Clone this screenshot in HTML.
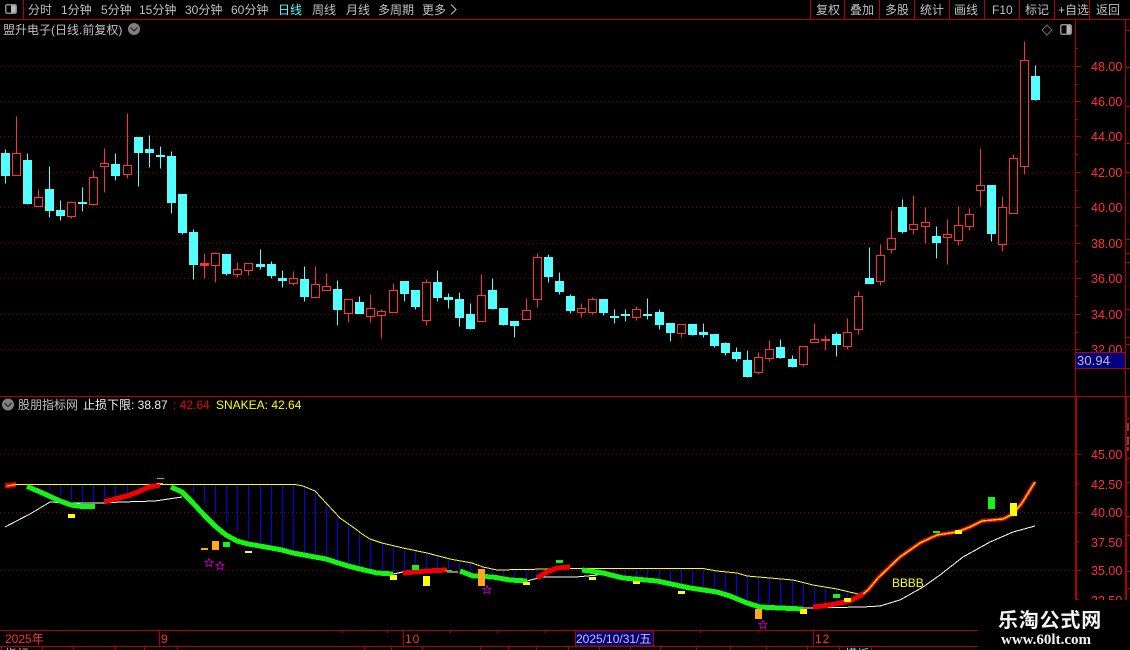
<!DOCTYPE html>
<html>
<head>
<meta charset="utf-8">
<style>
html,body{margin:0;padding:0;background:#000;width:1130px;height:650px;overflow:hidden}
svg{display:block;position:absolute;left:0;top:0}
text{font-family:"Liberation Sans","WenQuanYi Zen Hei","Noto Sans CJK SC",sans-serif;font-size:12px;fill:#c0c0c0}
.ax text{fill:#ff3232;font-size:12.5px}
.tb text{font-size:12px}
</style>
</head>
<body>
<svg width="1130" height="650" viewBox="0 0 1130 650">
<rect width="1130" height="650" fill="#000"/>

<!-- grid -->
<g stroke="#8c0000" stroke-width="1" stroke-dasharray="1 3" fill="none" shape-rendering="crispEdges">
<path d="M0 66.5H1075M0 101.5H1075M0 136.5H1075M0 172.5H1075M0 207.5H1075M0 243.5H1075M0 278.5H1075M0 314.5H1075M0 349.5H1075"/>
<path d="M0 454.5H1075M0 512.5H1075M0 570.5H1075"/>
</g>

<!-- frame lines -->
<g stroke="#b00000" fill="none" shape-rendering="crispEdges">
<path d="M0 19.5H1130M0 396.5H1130" stroke-width="1"/>
<path d="M23.5 0V19M810.5 0V19M844.5 0V19M879.5 0V19M914.5 0V19M949.5 0V19M984.5 0V19M1019.5 0V19M1054.5 0V19M1089.5 0V19"/>
<path d="M1075.5 19V396M1125.5 19V396"/>
<path d="M1076 397V600M1126 397V600" stroke-width="2"/>
<!-- left axis ticks -->
<path d="M1075 66.5H1081M1075 101.5H1081M1075 136.5H1081M1075 172.5H1081M1075 207.5H1081M1075 243.5H1081M1075 278.5H1081M1075 314.5H1081M1075 349.5H1081"/>
<path d="M1075 84.5H1078M1075 119.5H1078M1075 154.5H1078M1075 190.5H1078M1075 225.5H1078M1075 261.5H1078M1075 296.5H1078M1075 332.5H1078M1075 368.5H1078M1075 48.5H1078"/>
<path d="M1076 454.5H1081M1076 512.5H1081M1076 570.5H1081M1076 483.5H1079M1076 541.5H1079M1076 599.5H1079" stroke-width="1"/>
<!-- right axis ticks -->
<path d="M1126 30.5H1130M1126 67.5H1130M1126 106.5H1130M1126 143.5H1130M1126 172.5H1130M1126 239.5H1130M1126 253.5H1130M1126 262.5H1130M1126 309.5H1130M1126 337.5H1130M1126 344.5H1130M1126 368.5H1130"/>
<path d="M1127 418.5H1130M1127 437.5H1130M1127 458.5H1130M1127 482.5H1130M1127 516.5H1130M1127 535.5H1130M1127 571.5H1130M1127 588.5H1130"/>
</g>
<path d="M1128 423V431M1128 437V445M1128 447V451" stroke="#a8a8a8" stroke-width="1" fill="none" shape-rendering="crispEdges"/>

<!-- candles cyan -->
<path fill="#54ffff" stroke="#54ffff" stroke-width="1" shape-rendering="crispEdges" d="M5.5 149.5V183.5M1.5 153.5h8V175.5h-8zM27.5 153.5V204.5M23.5 160.5h8V203.5h-8zM49.5 166.5V217.5M45.5 189.5h8V210.5h-8zM60.5 200.5V220.5M56.5 210.5h8V215.5h-8zM82.5 187.5V211.5M78.5 202.5h8V203.5h-8zM115.5 153.5V180.5M111.5 164.5h8V175.5h-8zM138.5 137.5V186.5M134.5 137.5h8V152.5h-8zM149.5 135.5V167.5M145.5 149.5h8V152.5h-8zM160.5 146.5V168.5M156.5 155.5h8V156.5h-8zM171.5 151.5V213.5M167.5 156.5h8V202.5h-8zM182.5 194.5V234.5M178.5 194.5h8V232.5h-8zM193.5 229.5V279.5M189.5 232.5h8V264.5h-8zM226.5 254.5V275.5M222.5 254.5h8V273.5h-8zM260.5 249.5V269.5M256.5 264.5h8V266.5h-8zM271.5 261.5V278.5M267.5 264.5h8V275.5h-8zM282.5 270.5V287.5M278.5 278.5h8V280.5h-8zM304.5 266.5V301.5M300.5 279.5h8V296.5h-8zM337.5 280.5V325.5M333.5 289.5h8V309.5h-8zM359.5 296.5V313.5M355.5 302.5h8V313.5h-8zM404.5 281.5V301.5M400.5 281.5h8V293.5h-8zM415.5 290.5V309.5M411.5 290.5h8V306.5h-8zM437.5 270.5V301.5M433.5 282.5h8V297.5h-8zM448.5 293.5V308.5M444.5 297.5h8V299.5h-8zM459.5 292.5V326.5M455.5 299.5h8V317.5h-8zM470.5 303.5V329.5M466.5 314.5h8V328.5h-8zM492.5 278.5V309.5M488.5 290.5h8V308.5h-8zM503.5 308.5V325.5M499.5 308.5h8V324.5h-8zM514.5 321.5V337.5M510.5 321.5h8V325.5h-8zM548.5 254.5V282.5M544.5 257.5h8V276.5h-8zM559.5 272.5V294.5M555.5 281.5h8V291.5h-8zM570.5 294.5V313.5M566.5 296.5h8V310.5h-8zM603.5 299.5V315.5M599.5 299.5h8V312.5h-8zM614.5 309.5V323.5M610.5 316.5h8V317.5h-8zM625.5 309.5V321.5M621.5 314.5h8V315.5h-8zM647.5 298.5V319.5M643.5 314.5h8V315.5h-8zM659.5 309.5V329.5M655.5 312.5h8V324.5h-8zM670.5 323.5V341.5M666.5 323.5h8V332.5h-8zM692.5 324.5V335.5M688.5 324.5h8V334.5h-8zM703.5 323.5V337.5M699.5 332.5h8V334.5h-8zM714.5 334.5V347.5M710.5 334.5h8V345.5h-8zM725.5 342.5V355.5M721.5 343.5h8V352.5h-8zM736.5 347.5V361.5M732.5 352.5h8V358.5h-8zM747.5 350.5V377.5M743.5 360.5h8V376.5h-8zM780.5 339.5V358.5M776.5 347.5h8V357.5h-8zM792.5 355.5V367.5M788.5 359.5h8V366.5h-8zM836.5 332.5V356.5M832.5 334.5h8V344.5h-8zM869.5 247.5V283.5M865.5 278.5h8V283.5h-8zM902.5 199.5V233.5M898.5 207.5h8V231.5h-8zM936.5 226.5V258.5M932.5 236.5h8V242.5h-8zM991.5 185.5V241.5M987.5 185.5h8V233.5h-8zM1035.5 65.5V100.5M1031.5 76.5h8V99.5h-8z"/>

<!-- candles red -->
<path fill="none" stroke="#ff3232" stroke-width="1" shape-rendering="crispEdges" d="M16.5 116.5V153.5M12.5 153.5h8V175.5h-8zM38.5 189.5V197.5M34.5 197.5h8V206.5h-8zM71.5 201.5V202.5M67.5 202.5h8V216.5h-8zM71.5 216.5V218.5M93.5 170.5V177.5M89.5 177.5h8V204.5h-8zM93.5 204.5V205.5M104.5 148.5V163.5M100.5 163.5h8V166.5h-8zM104.5 166.5V192.5M127.5 113.5V165.5M123.5 165.5h8V174.5h-8zM127.5 174.5V178.5M204.5 253.5V263.5M200.5 263.5h8V265.5h-8zM204.5 265.5V278.5M215.5 252.5V253.5M211.5 253.5h8V265.5h-8zM215.5 265.5V282.5M237.5 262.5V269.5M233.5 269.5h8V274.5h-8zM237.5 274.5V277.5M244.5 263.5h8V270.5h-8zM248.5 270.5V275.5M293.5 271.5V278.5M289.5 278.5h8V283.5h-8zM293.5 283.5V285.5M315.5 266.5V284.5M311.5 284.5h8V297.5h-8zM326.5 273.5V286.5M322.5 286.5h8V290.5h-8zM344.5 299.5h8V313.5h-8zM348.5 313.5V322.5M370.5 294.5V308.5M366.5 308.5h8V316.5h-8zM370.5 316.5V322.5M381.5 309.5V311.5M377.5 311.5h8V315.5h-8zM381.5 315.5V338.5M393.5 283.5V290.5M389.5 290.5h8V312.5h-8zM426.5 279.5V282.5M422.5 282.5h8V320.5h-8zM426.5 320.5V325.5M481.5 274.5V295.5M477.5 295.5h8V321.5h-8zM526.5 298.5V310.5M522.5 310.5h8V319.5h-8zM537.5 253.5V257.5M533.5 257.5h8V299.5h-8zM537.5 299.5V307.5M581.5 303.5V308.5M577.5 308.5h8V312.5h-8zM581.5 312.5V317.5M592.5 297.5V299.5M588.5 299.5h8V312.5h-8zM592.5 312.5V314.5M636.5 306.5V309.5M632.5 309.5h8V317.5h-8zM636.5 317.5V320.5M677.5 324.5h8V333.5h-8zM681.5 333.5V337.5M758.5 352.5V357.5M754.5 357.5h8V372.5h-8zM758.5 372.5V374.5M769.5 340.5V349.5M765.5 349.5h8V358.5h-8zM769.5 358.5V361.5M799.5 346.5h8V364.5h-8zM803.5 364.5V366.5M814.5 323.5V339.5M810.5 339.5h8V342.5h-8zM825.5 335.5V339.5M821.5 339.5h8V340.5h-8zM825.5 340.5V350.5M847.5 318.5V332.5M843.5 332.5h8V346.5h-8zM847.5 346.5V349.5M858.5 291.5V296.5M854.5 296.5h8V329.5h-8zM858.5 329.5V334.5M880.5 244.5V255.5M876.5 255.5h8V281.5h-8zM880.5 281.5V285.5M891.5 210.5V238.5M887.5 238.5h8V249.5h-8zM891.5 249.5V253.5M913.5 195.5V224.5M909.5 224.5h8V229.5h-8zM913.5 229.5V234.5M925.5 207.5V222.5M921.5 222.5h8V226.5h-8zM925.5 226.5V243.5M947.5 219.5V234.5M943.5 234.5h8V237.5h-8zM947.5 237.5V264.5M958.5 206.5V225.5M954.5 225.5h8V240.5h-8zM958.5 240.5V245.5M969.5 208.5V214.5M965.5 214.5h8V226.5h-8zM969.5 226.5V230.5M980.5 148.5V185.5M976.5 185.5h8V190.5h-8zM980.5 190.5V206.5M1002.5 196.5V207.5M998.5 207.5h8V244.5h-8zM1002.5 244.5V251.5M1013.5 154.5V158.5M1009.5 158.5h8V213.5h-8zM1024.5 41.5V60.5M1020.5 60.5h8V166.5h-8zM1024.5 166.5V174.5"/>
<rect x="200" y="263" width="9" height="3" fill="#ff3232"/>

<!-- lower panel: blue stems -->
<path stroke="#0000ff" stroke-width="1" fill="none" shape-rendering="crispEdges" d="M38.5 484V487M49.5 484V490M60.5 484V495M71.5 484V500M82.5 484V504M93.5 484V505M104.5 484V500M115.5 484V497M127.5 484V494M138.5 484V490M182.5 484V487M193.5 484V493M204.5 484V503M215.5 484V513M226.5 484V523M237.5 484V532M248.5 484V538M260.5 484V542M271.5 484V545M282.5 484V548M293.5 484V551M304.5 486V553M315.5 491V556M326.5 503V558M337.5 516V561M348.5 526V564M359.5 534V569M370.5 539V571M382.5 543V573M393.5 545V573M404.5 548V572M415.5 550V571M426.5 553V570M437.5 556V569M448.5 559V569M459.5 561V570M470.5 563V575M481.5 566V576M492.5 569V577M503.5 570V580M514.5 570V581M526.5 570V581M537.5 570V577M548.5 570V571M581.5 568V569M592.5 568V571M603.5 568V572M614.5 568V574M625.5 568V576M636.5 568V579M647.5 568V580M659.5 568V582M670.5 568V583M681.5 568V585M692.5 568V587M703.5 569V589M714.5 570V591M725.5 572V594M736.5 573V598M747.5 576V602M758.5 577V606M769.5 578V607M780.5 579V607M792.5 580V608M803.5 582V608M814.5 585V606M825.5 587V605M836.5 589V603M847.5 591V600"/>

<!-- yellow line -->
<path fill="none" stroke="#ffff00" stroke-width="1" shape-rendering="crispEdges" d="M5 484.5H295L303 486L315 491L327 504L340 518L357 530L362 534L370 539L382 543L403 548L427 553L450 559L472 563L483 567L497 570L573 568.5H703L717 571L737 573L747 576L770 578L793 580L813 585L837 589L858 594"/>

<!-- white line -->
<path fill="none" stroke="#ffffff" stroke-width="1" shape-rendering="crispEdges" d="M5 527L30 514L50 502L70 503L100 503L122 502L155 501L182 497M393 574L403 572H458M527 581L542 577H576L587 576L598 575M803 608L863 607L880 606L900 600L923 587L940 575L963 557L990 542L1013 532L1035 526"/>

<!-- thick line segments -->
<g fill="none" stroke-width="5" stroke-linejoin="round" shape-rendering="crispEdges">
<path stroke="#14f514" d="M27 486.5L38 491L49 496L60 501L71 505L82 506.5L95 506.5"/>
<path stroke="#14f514" d="M171 487L182 492L193 503L204 515L215 526L226 535L237 541L248 544L260 546L271 548L282 550L293 553L304 555L315 557L326 559L340 563.5L348 566L360 569L377 573L393 574"/>
<path stroke="#14f514" d="M460 571L473 576L493 577L510 580L527 581"/>
<path stroke="#14f514" d="M582 570L603 573L623 578L657 581L690 588L717 592L730 596L747 603L760 607L780 608L803 609"/>
<path stroke="#f00000" d="M5 486L16 484.5"/>
<path stroke="#f00000" d="M104 502L115 499L127 496L138 492L149 487L160 485"/>
<path stroke="#f00000" d="M403 573L427 571L447 570"/>
<path stroke="#f00000" d="M537 578L547 572L557 568L570 567"/>
<path stroke="#f00000" d="M813 607L830 605L850 601L863 594"/>
<path stroke="#f00000" stroke-width="4" d="M863 594L868 590L878 578L900 557L920 543L937 535L957 532L970 527L982 521L1003 519L1013 514L1022 503L1035 482"/>
</g>
<path fill="none" stroke="#ffe000" stroke-width="1.3" shape-rendering="crispEdges" d="M863 594L868 590L878 578L900 557L920 543L937 535L957 532L970 527L982 521L1003 519L1013 514L1022 503L1035 482"/>
<path fill="none" stroke="#ffff00" stroke-width="1" d="M7 486L16 484.5"/>

<!-- markers -->
<g shape-rendering="crispEdges">
<g fill="#ffff00">
<rect x="68" y="514" width="7" height="4"/>
<rect x="245" y="551" width="7" height="2"/>
<rect x="390" y="575" width="7" height="5"/>
<rect x="423" y="576" width="7" height="10"/>
<rect x="523" y="582" width="7" height="3"/>
<rect x="589" y="577" width="7" height="3"/>
<rect x="633" y="581" width="7" height="3"/>
<rect x="678" y="591" width="7" height="3"/>
<rect x="800" y="609" width="7" height="5"/>
<rect x="844" y="598" width="7" height="4"/>
<rect x="955" y="530" width="7" height="4"/>
<rect x="1010" y="503" width="7" height="13"/>
</g>
<g fill="#ffa81e">
<rect x="201" y="548" width="7" height="2"/>
<rect x="212" y="541" width="7" height="9"/>
<rect x="478" y="569" width="7" height="17"/>
<rect x="755" y="609" width="7" height="10"/>
<rect x="157" y="483" width="6" height="1"/>
</g>
<g fill="#14f514">
<rect x="157" y="478" width="7" height="1"/>
<rect x="223" y="542" width="7" height="5"/>
<rect x="412" y="565" width="7" height="5"/>
<rect x="445" y="570" width="7" height="1"/>
<rect x="556" y="560" width="7" height="3"/>
<rect x="833" y="594" width="7" height="4"/>
<rect x="933" y="531" width="7" height="2"/>
<rect x="988" y="497" width="7" height="12"/>
</g>
</g>
<g fill="none" stroke="#b000b0" stroke-width="1">
<path d="M209 558.5L210.2 561.3L213 561.5L210.9 563.4L211.6 566.5L209 564.9L206.4 566.5L207.1 563.4L205 561.5L207.8 561.3Z"/>
<path d="M220 561.5L221.2 564.3L224 564.5L221.9 566.4L222.6 569.5L220 567.9L217.4 569.5L218.1 566.4L216 564.5L218.8 564.3Z"/>
<path d="M487 585.5L488.2 588.3L491 588.5L488.9 590.4L489.6 593.5L487 591.9L484.4 593.5L485.1 590.4L483 588.5L485.8 588.3Z"/>
<path d="M763 620.5L764.2 623.3L767 623.5L764.9 625.4L765.6 628.5L763 626.9L760.4 628.5L761.1 625.4L759 623.5L761.8 623.3Z"/>
</g>
<text x="892" y="587" style="fill:#ffff00;font-size:12px;letter-spacing:-.1px">BBBB</text>

<!-- axis labels -->
<g class="ax">
<text x="1091" y="71">48.00</text>
<text x="1091" y="106">46.00</text>
<text x="1091" y="141">44.00</text>
<text x="1091" y="177">42.00</text>
<text x="1091" y="212">40.00</text>
<text x="1091" y="248">38.00</text>
<text x="1091" y="283">36.00</text>
<text x="1091" y="319">34.00</text>
<text x="1091" y="354">32.00</text>
<text x="1091" y="459">45.00</text>
<text x="1091" y="489">42.50</text>
<text x="1091" y="517">40.00</text>
<text x="1091" y="547">37.50</text>
<text x="1091" y="575">35.00</text>
<text x="1091" y="605">32.50</text>
</g>

<!-- price box -->
<rect x="1075.5" y="352.5" width="50" height="16" fill="#000080" stroke="#b00000"/>
<text x="1077" y="365" style="font-size:13px;fill:#c0c0c0;letter-spacing:.1px">30.94</text>

<!-- toolbar -->
<g class="tb">
<text x="28" y="14">分时</text>
<text x="61" y="14">1分钟</text>
<text x="101" y="14">5分钟</text>
<text x="139" y="14">15分钟</text>
<text x="185" y="14">30分钟</text>
<text x="231" y="14">60分钟</text>
<text x="278" y="14" style="fill:#54ffff">日线</text>
<text x="312" y="14">周线</text>
<text x="346" y="14">月线</text>
<text x="378" y="14">多周期</text>
<text x="422" y="14">更多</text>
<path d="M451 4.5L456 9.5L451 14.5" fill="none" stroke="#c0c0c0"/>
<text x="816" y="14">复权</text>
<text x="850" y="14">叠加</text>
<text x="885" y="14">多股</text>
<text x="920" y="14">统计</text>
<text x="954" y="14">画线</text>
<text x="992" y="14">F10</text>
<text x="1025" y="14">标记</text>
<text x="1058" y="14">+自选</text>
<text x="1096" y="14">返回</text>
</g>
<rect x="5.75" y="4.75" width="10.5" height="8.5" rx="1.5" fill="#000" stroke="#8c8c8c" stroke-width="1.5"/>
<rect x="11" y="5.5" width="4.5" height="7" fill="#b8b8b8"/>

<!-- title -->
<text x="3" y="34">盟升电子(日线.前复权)</text>
<circle cx="134" cy="29" r="6" fill="#808080"/>
<path d="M130.5 27.5L134 31L137.5 27.5" fill="none" stroke="#2a2a2a" stroke-width="1.3"/>
<path d="M1047 25L1052 30L1047 35L1042 30Z" fill="none" stroke="#707070"/>
<rect x="1060.75" y="24.75" width="10.5" height="9.5" rx="1.5" fill="#000" stroke="#8c8c8c" stroke-width="1.5"/>
<rect x="1066.5" y="25.5" width="4" height="8" fill="#b8b8b8"/>

<!-- lower title -->
<circle cx="8" cy="404.5" r="6" fill="#808080"/>
<path d="M4.5 403L8 406.5L11.5 403" fill="none" stroke="#2a2a2a" stroke-width="1.3"/>
<text x="18" y="409">股朋指标网</text>
<text x="83" y="409" style="fill:#f0f0f0">止损下限: 38.87</text>
<text x="173" y="409" style="fill:#f00000">: 42.64</text>
<text x="216" y="409" style="fill:#ffff00">SNAKEA: 42.64</text>

<!-- date bar -->
<g stroke="#b00000" fill="none" shape-rendering="crispEdges">
<path d="M0 630.5H978M0 646.5H978"/>
<path d="M159.5 631V646M403.5 631V646M813.5 631V646"/>
<path d="M1.5 646V650M42.5 646V650M73.5 646V650M115.5 646V650M144.5 646V650M177.5 646V650M364.5 646V650M391.5 646V650M422.5 646V650M480.5 646V650M508.5 646V650M536.5 646V650M568.5 646V650M599.5 646V650M630.5 646V650M660.5 646V650M696.5 646V650M730.5 646V650M766.5 646V650M807.5 646V650M839.5 646V650M871.5 646V650"/>
<path d="M342.5 631V633M387.5 631V633M450.5 631V633M497.5 631V633M544.5 631V633M700.5 631V633M758.5 631V633"/>
</g>
<text x="5" y="643" style="fill:#ff3232">2025年</text>
<text x="161" y="643" style="fill:#ff3232">9</text>
<text x="405" y="643" style="fill:#ff3232;letter-spacing:1px">10</text>
<text x="815" y="643" style="fill:#ff3232;letter-spacing:1px">12</text>
<rect x="575.5" y="631" width="78" height="15" fill="#000080" stroke="#b00000" shape-rendering="crispEdges"/>
<text x="576" y="643" style="fill:#c8c8c8">2025/10/31/五</text>
<text x="5" y="658" style="fill:#c0c0c0">指标</text>
<text x="845" y="658" style="fill:#54ffff">模板</text>

<!-- watermark -->
<rect x="978" y="600" width="152" height="50" fill="#000"/>
<text x="998" y="627" style="font-family:'Noto Sans CJK SC','Liberation Sans',sans-serif;font-weight:700;font-size:20px;letter-spacing:.8px;fill:#f4f4f4">乐淘公式网</text>
<text x="1001" y="644" style="font-family:'Liberation Serif',serif;font-weight:700;font-size:15px;fill:#f4f4f4">www.60lt.com</text>
</svg>
</body>
</html>
